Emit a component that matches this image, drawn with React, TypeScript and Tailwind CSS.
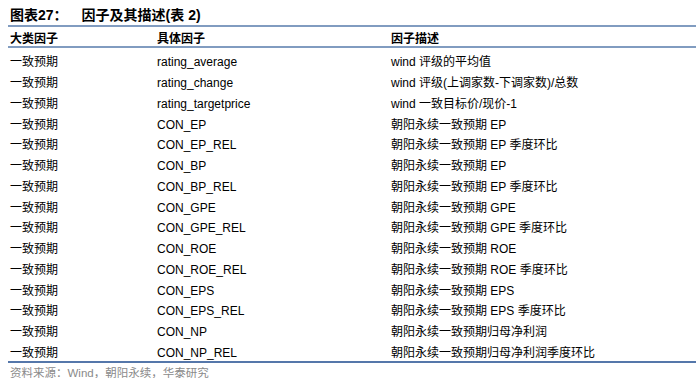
const rows: [string, string][] = [
  ['rating_average', 'wind 评级的平均值'],
  ['rating_change', 'wind 评级(上调家数-下调家数)/总数'],
  ['rating_targetprice', 'wind 一致目标价/现价-1'],
  ['CON_EP', '朝阳永续一致预期 EP'],
  ['CON_EP_REL', '朝阳永续一致预期 EP 季度环比'],
  ['CON_BP', '朝阳永续一致预期 EP'],
  ['CON_BP_REL', '朝阳永续一致预期 EP 季度环比'],
  ['CON_GPE', '朝阳永续一致预期 GPE'],
  ['CON_GPE_REL', '朝阳永续一致预期 GPE 季度环比'],
  ['CON_ROE', '朝阳永续一致预期 ROE'],
  ['CON_ROE_REL', '朝阳永续一致预期 ROE 季度环比'],
  ['CON_EPS', '朝阳永续一致预期 EPS'],
  ['CON_EPS_REL', '朝阳永续一致预期 EPS 季度环比'],
  ['CON_NP', '朝阳永续一致预期归母净利润'],
  ['CON_NP_REL', '朝阳永续一致预期归母净利润季度环比'],
]

const font = { fontFamily: '"Liberation Sans", "Noto Sans CJK SC", sans-serif' }

export default function App() {
  return (
    <div className="w-[700px] h-[378px] bg-white text-black overflow-hidden" style={font}>
      <div className="pl-[10px] pt-[5px] h-[25px] flex items-center text-[14px] font-bold leading-none">
        <span>图表27：</span>
        <span className="ml-[14px]">因子及其描述(表 2)</span>
      </div>

      <div className="ml-[8px] w-[688px]">
        {/* header */}
        <div className="flex items-center h-[23px] pt-[4px] border-t-2 border-b-2 border-[#819cc0] text-[12px] font-bold leading-none">
          <div className="w-[147px] pl-[2px]">大类因子</div>
          <div className="w-[234px] pl-[2px]">具体因子</div>
          <div className="pl-[2px]">因子描述</div>
        </div>

        {/* body */}
        <div className="pt-[2px] border-b-2 border-[#5577aa]">
          {rows.map(([name, desc]) => (
            <div key={name} className="flex items-center h-[20.75px] pt-[4px] text-[12px] leading-none">
              <div className="w-[147px] pl-[2px]">一致预期</div>
              <div className="w-[234px] pl-[2px]">{name}</div>
              <div className="pl-[2px] whitespace-nowrap">{desc}</div>
            </div>
          ))}
        </div>
      </div>

      <div className="pl-[10px] pt-[5px] text-[11.5px] leading-none text-[#8a8a8a]">
        资料来源：Wind，朝阳永续，华泰研究
      </div>
    </div>
  )
}
